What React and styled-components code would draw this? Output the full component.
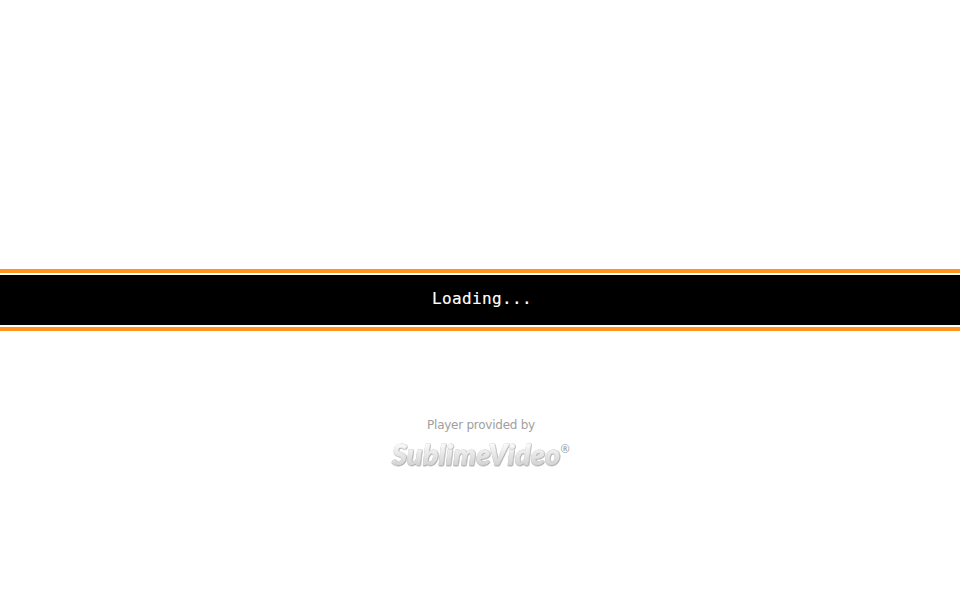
import React from "react";
import styled, { createGlobalStyle } from "styled-components";

const GlobalStyle = createGlobalStyle`
  body { margin: 0; background: #fff; }
`;

const Page = styled.main`
  height: 600px;
  display: flex;
  flex-direction: column;
  align-items: center;
  overflow: hidden;
`;

const Band = styled.section`
  box-sizing: border-box;
  width: 100%;
  height: 62px;
  margin-top: 269px;
  padding: 2px 0;
  border: solid #ff931e;
  border-width: 4px 0;
`;

const Status = styled.div`
  height: 50px;
  background: #000;
  color: #fff;
  font: 16px/48px "DejaVu Sans Mono", monospace;
  letter-spacing: 0.37px;
  text-align: center;
  padding-left: 4px;
  -webkit-text-stroke: 0.15px #fff;
`;

const Credit = styled.footer`
  margin-top: 86px;
  display: flex;
  flex-direction: column;
  align-items: center;
`;

const Caption = styled.span`
  margin-left: 2px;
  color: #a0a0a0;
  font: 12px/16px "DejaVu Sans", sans-serif;
  letter-spacing: -0.25px;
`;

const Logo = styled.svg`
  display: block;
  width: 184px;
  height: 40px;
  margin-left: 2px;
`;

const Wordmark = styled.text`
  font: italic 900 28.5px Lato, sans-serif;
  stroke-width: 0.8px;
  stroke-linejoin: round;
`;

const Mark = styled.text`
  font: 400 11px "Open Sans", sans-serif;
  fill: #949494;
`;

function SublimeVideoLogo() {
  const box = { x: 3, y: 31.8, textLength: 168, lengthAdjust: "spacing" };
  return (
    <Logo viewBox="0 0 184 40" aria-label="SublimeVideo">
      <defs>
        <linearGradient id="silver" gradientUnits="userSpaceOnUse" x1="0" y1="10" x2="0" y2="33">
          <stop offset="0" stopColor="#fcfcfc" />
          <stop offset="1" stopColor="#d2d2d2" />
        </linearGradient>
        <filter id="edge" x="-5%" y="-20%" width="110%" height="140%">
          <feDropShadow dx="0.3" dy="0.3" stdDeviation="0.5" floodColor="#333" floodOpacity="1" />
        </filter>
      </defs>
      <Wordmark {...box} fill="url(#silver)" stroke="url(#silver)" filter="url(#edge)">
        SublimeVideo
      </Wordmark>
      <Mark x="171.5" y="19.5">®</Mark>
    </Logo>
  );
}

export default function App() {
  return (
    <>
      <GlobalStyle />
      <Page>
        <Band>
          <Status>Loading...</Status>
        </Band>
        <Credit>
          <Caption>Player provided by</Caption>
          <SublimeVideoLogo />
        </Credit>
      </Page>
    </>
  );
}
